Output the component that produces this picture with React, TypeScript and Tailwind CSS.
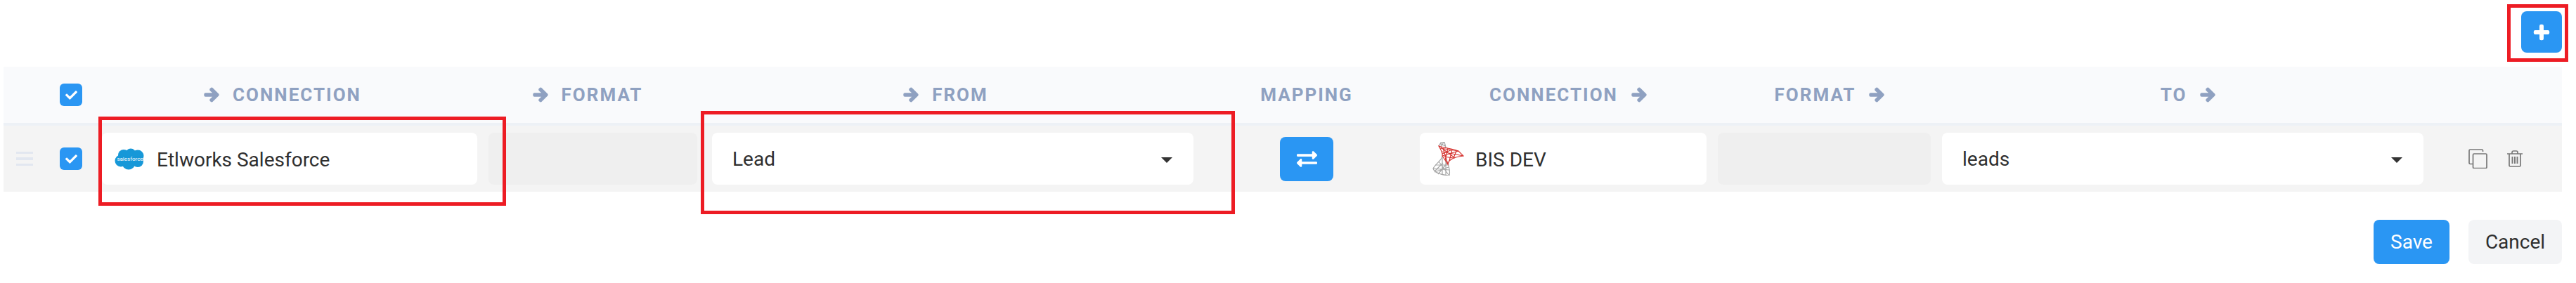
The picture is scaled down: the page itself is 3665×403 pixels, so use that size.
import { FaArrowRight, FaCheck, FaExchangeAlt, FaPlus } from "react-icons/fa"

const gridCols = "grid grid-cols-[60px_72px_550px_318px_701px_306px_424px_319px_701px_189px]"

function Checkbox() {
  return (
    <div className="flex h-8 w-8 items-center justify-center rounded-[6px] bg-[#2a96f3] text-white">
      <FaCheck size={17} />
    </div>
  )
}

function HeadArrow() {
  return <FaArrowRight size={22} stroke="currentColor" strokeWidth={50} />
}

function HeadLabel({ label, arrow, className }: { label: string; arrow?: "left" | "right"; className?: string }) {
  return (
    <div className={`flex items-center justify-center gap-[19px] ${className ?? ""}`}>
      {arrow === "left" && <HeadArrow />}
      <span>{label}</span>
      {arrow === "right" && <HeadArrow />}
    </div>
  )
}

function SalesforceLogo() {
  return (
    <svg viewBox="0 0 44 31" className="h-[31px] w-[44px] shrink-0">
      <g fill="#1798d8">
        <circle cx="13" cy="10" r="8" />
        <circle cx="23" cy="8" r="7.5" />
        <circle cx="33" cy="11" r="8.5" />
        <circle cx="9" cy="18" r="8.5" />
        <circle cx="20" cy="21" r="9.5" />
        <circle cx="33" cy="19" r="8" />
      </g>
      <text x="22" y="17.5" textAnchor="middle" fill="#ffffff" fontSize="8" fontFamily="Roboto, sans-serif">
        salesforce
      </text>
    </svg>
  )
}

function SqlServerLogo() {
  return (
    <svg viewBox="0 0 45 48" className="h-12 w-[45px] shrink-0" fill="none">
      <g stroke="#a6a6a6" strokeWidth="1.2">
        <path d="M9 6 L12 1 L17 0 L19 8" />
        <path d="M11 2 L18 6 M16 0.5 L12 7 M10 4 L19 5" />
        <path d="M14 20 C14 26 5 30 1 38 C3 44 12 47 24 48 C26 40 22 34 22 28" />
        <path d="M14 22 L14 46 M19 24 L19 47 M9 28 L23 47 M4 33 L22 33 M1 38 L24 40 M3 43 L23 36 M8 46 L21 30 M15 30 L3 42" />
      </g>
      <g stroke="#d5332f" strokeWidth="1.15">
        <path d="M9 6 C18 9 30 10 37 13 L44 20 C36 21 30 22 24 27 C23 29 22 31 22 32 L14 20 C15 15 11 10 9 6 Z" />
        <path d="M11 9 L37 13 M13 14 L44 20 M14 20 L37 13 M15 9 L22 32 M22 9 L18 26 M28 11 L24 27 M34 13 L30 23 M16 21 L30 23 M12 8 L32 23 M14 17 L28 11" />
      </g>
    </svg>
  )
}

function CopyIcon() {
  return (
    <svg viewBox="0 0 27 28" className="h-7 w-[27px]" fill="none" stroke="#777777" strokeWidth="1.7">
      <path d="M20.5 4 V2.5 A1.5 1.5 0 0 0 19 1 H2.5 A1.5 1.5 0 0 0 1 2.5 V20 A1.5 1.5 0 0 0 2.5 21.5 H6" />
      <rect x="6.5" y="7" width="19.5" height="20.5" rx="1.5" />
    </svg>
  )
}

function TrashIcon() {
  return (
    <svg viewBox="0 0 22 24" className="h-6 w-[22px]" fill="none" stroke="#777777" strokeWidth="1.7">
      <path d="M0 5 H22 M7 5 V3 A2 2 0 0 1 9 1 H13 A2 2 0 0 1 15 3 V5" />
      <path d="M3 5 V21.5 A1.5 1.5 0 0 0 4.5 23 H17.5 A1.5 1.5 0 0 0 19 21.5 V5" />
      <path d="M7.5 9 V19 M11 9 V19 M14.5 9 V19" strokeWidth="1.9" />
    </svg>
  )
}

function Caret() {
  return <div className="mt-[4px] h-0 w-0 border-x-[8px] border-t-[8px] border-x-transparent border-t-[#333333]" />
}

export default function App() {
  return (
    <div className="relative h-[403px] w-[3665px] overflow-hidden bg-white pl-[5px] pr-5 pt-4 font-['Roboto',sans-serif] text-[28px] text-[#2f2f2f]">
      <div className="flex justify-end">
        <button className="flex h-[59px] w-[58px] items-center justify-center rounded-[8px] bg-[#2a96f3] text-white">
          <FaPlus size={24} stroke="currentColor" strokeWidth={30} />
        </button>
      </div>

      <div
        className={`${gridCols} mt-5 h-[84px] items-center border-b-4 border-[#edf1f6] bg-[#f9fafc] text-[26px] font-bold tracking-[2px] text-[#8fa1c1]`}
      >
        <div />
        <div className="flex justify-center">
          <Checkbox />
        </div>
        <HeadLabel label="CONNECTION" arrow="left" className="pr-5" />
        <HeadLabel label="FORMAT" arrow="left" className="pr-5" />
        <HeadLabel label="FROM" arrow="left" className="pr-5" />
        <HeadLabel label="MAPPING" />
        <HeadLabel label="CONNECTION" arrow="right" className="pl-[14px]" />
        <HeadLabel label="FORMAT" arrow="right" className="pl-[15px]" />
        <HeadLabel label="TO" arrow="right" className="pl-[15px]" />
        <div />
      </div>

      <div className={`${gridCols} h-[94px] items-center bg-[#f4f4f4]`}>
        <div className="flex flex-col items-end gap-[5px] pr-[18px]">
          <div className="h-[3.5px] w-6 bg-[#e2e7f0]" />
          <div className="h-[3.5px] w-6 bg-[#e2e7f0]" />
          <div className="h-[3.5px] w-6 bg-[#e2e7f0]" />
        </div>
        <div className="flex justify-center">
          <Checkbox />
        </div>
        <div className="px-2">
          <div className="flex h-[74px] items-center gap-4 rounded-[8px] bg-white pl-[18px]">
            <SalesforceLogo />
            <span className="pt-[3px]">Etlworks Salesforce</span>
          </div>
        </div>
        <div className="pl-2 pr-[13px]">
          <div className="h-[74px] rounded-[8px] bg-[#efefef]" />
        </div>
        <div className="px-2">
          <div className="flex h-[74px] items-center justify-between rounded-[8px] bg-white pl-[29px] pr-[30px]">
            <span className="pt-[1px]">Lead</span>
            <Caret />
          </div>
        </div>
        <div className="flex justify-center">
          <button className="flex h-[63px] w-[76px] items-center justify-center rounded-[8px] bg-[#2a96f3] text-white">
            <FaExchangeAlt size={29} />
          </button>
        </div>
        <div className="px-2">
          <div className="flex h-[74px] items-center gap-4 rounded-[8px] bg-white pl-[18px]">
            <SqlServerLogo />
            <span className="pt-[3px]">BIS DEV</span>
          </div>
        </div>
        <div className="px-2">
          <div className="h-[74px] rounded-[8px] bg-[#efefef]" />
        </div>
        <div className="px-2">
          <div className="flex h-[74px] items-center justify-between rounded-[8px] bg-white pl-[29px] pr-[30px]">
            <span className="pt-[1px]">leads</span>
            <Caret />
          </div>
        </div>
        <div className="flex items-center gap-7 pl-14">
          <CopyIcon />
          <TrashIcon />
        </div>
      </div>

      <div className="mt-10 flex justify-end gap-[27px]">
        <button className="h-[63px] w-[108px] rounded-[8px] bg-[#2a96f3] text-white">Save</button>
        <button className="h-[63px] w-[133px] rounded-[8px] bg-[#f3f4f6]">Cancel</button>
      </div>

      <div className="absolute left-[140px] top-[166px] h-[127px] w-[580px] border-[5px] border-[#ed1c24]" />
      <div className="absolute left-[997px] top-[158px] h-[147px] w-[760px] border-[5px] border-[#ed1c24]" />
      <div className="absolute left-[3567px] top-[6px] h-[82px] w-[87px] border-[5px] border-[#ed1c24]" />
    </div>
  )
}
